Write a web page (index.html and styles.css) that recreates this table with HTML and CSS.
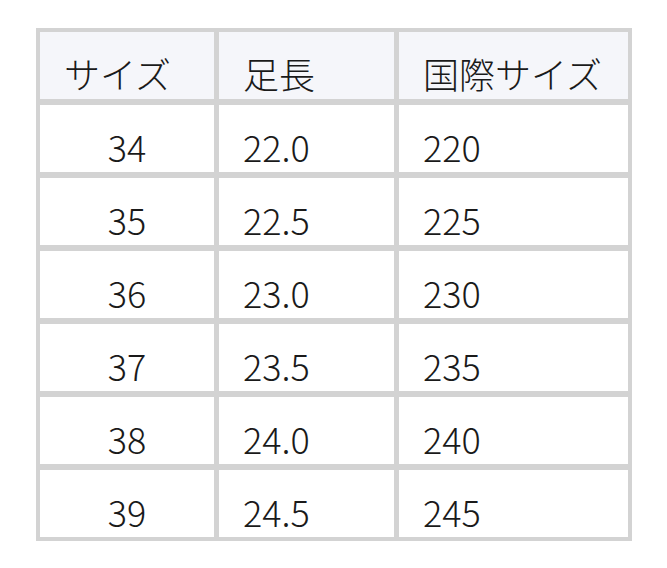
FILE: index.html
```html
<!DOCTYPE html>
<html lang="ja">
<head>
<meta charset="utf-8">
<link rel="stylesheet" href="styles.css">
</head>
<body>
<div class="size-table">
  <div class="cell head">サイズ</div>
  <div class="cell head">足長</div>
  <div class="cell head">国際サイズ</div>

  <div class="cell center">34</div><div class="cell">22.0</div><div class="cell">220</div>
  <div class="cell center">35</div><div class="cell">22.5</div><div class="cell">225</div>
  <div class="cell center">36</div><div class="cell">23.0</div><div class="cell">230</div>
  <div class="cell center">37</div><div class="cell">23.5</div><div class="cell">235</div>
  <div class="cell center">38</div><div class="cell">24.0</div><div class="cell">240</div>
  <div class="cell center">39</div><div class="cell">24.5</div><div class="cell">245</div>
</div>
</body>
</html>
```

FILE: styles.css
```css
html, body {
  margin: 0;
  padding: 0;
  background: #ffffff;
}

body {
  font-family: "Noto Sans CJK JP", "Noto Sans", sans-serif;
  color: #1a1a1a;
}

.size-table {
  display: inline-grid;
  grid-template-columns: 174px 175px 229px;
  grid-auto-rows: 67px;
  column-gap: 5px;
  row-gap: 6px;
  padding: 4px;
  margin: 28px 0 0 36px;
  background: #d3d3d3;
}

.cell {
  background: #ffffff;
  font-size: 36px;
  font-weight: 300;
  line-height: 67px;
  padding: 8px 24px 0;
  box-sizing: border-box;
  white-space: nowrap;
}

.cell.head {
  background: #f5f6fa;
}

.cell.center {
  text-align: center;
  padding-left: 0;
  padding-right: 0;
}
```
